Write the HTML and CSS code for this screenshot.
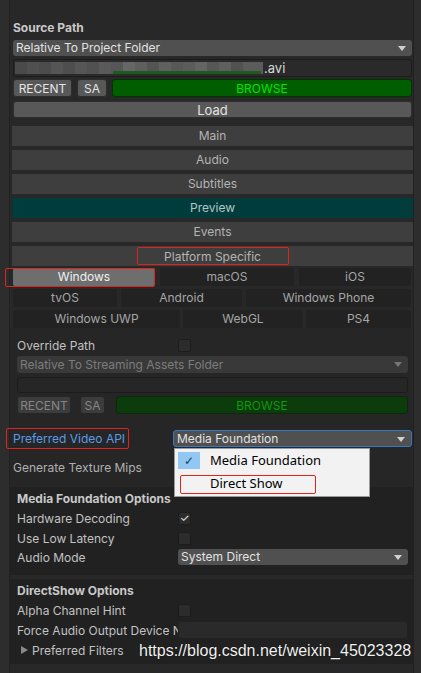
FILE: index.html
```html
<!DOCTYPE html>
<html lang="en">
<head>
    <meta charset="UTF-8">
    <meta name="viewport" content="width=device-width, initial-scale=1.0">
    <title>Media Player Inspector</title>
    <link rel="stylesheet" href="styles.css">
</head>
<body>

<div class="inspector">
    <section class="source">
        <div class="heading">Source Path</div>
        <div class="dropdown">Relative To Project Folder</div>
        <div class="field path"><span class="mosaic"></span><span class="ext">.avi</span></div>
        <div class="btn-row">
            <button class="btn recent">RECENT</button>
            <button class="btn sa">SA</button>
            <button class="btn browse">BROWSE</button>
        </div>
        <button class="btn load">Load</button>
    </section>

    <div class="tabs">
        <div class="tab">Main</div>
        <div class="tab">Audio</div>
        <div class="tab">Subtitles</div>
        <div class="tab active">Preview</div>
        <div class="tab">Events</div>
        <div class="tab"><span class="boxed">Platform Specific</span></div>
    </div>

    <div class="platforms">
        <div class="prow row1">
            <div class="pf sel">Windows</div>
            <div class="pf">macOS</div>
            <div class="pf">iOS</div>
        </div>
        <div class="prow row2">
            <div class="pf">tvOS</div>
            <div class="pf">Android</div>
            <div class="pf">Windows Phone</div>
        </div>
        <div class="prow row3">
            <div class="pf">Windows UWP</div>
            <div class="pf">WebGL</div>
            <div class="pf">PS4</div>
        </div>
    </div>

    <div class="settings">
        <div class="prop">
            <label>Override Path</label>
            <span class="check"></span>
        </div>
        <div class="dropdown off">Relative To Streaming Assets Folder</div>
        <div class="field blank"></div>
        <div class="btn-row dim">
            <button class="btn recent">RECENT</button>
            <button class="btn sa">SA</button>
            <button class="btn browse">BROWSE</button>
        </div>

        <div class="prop wide api">
            <label class="link">Preferred Video API</label>
            <div class="dropdown focus">
                Media Foundation
                <div class="popup">
                    <div class="item"><span class="tick">&#10003;</span>Media Foundation</div>
                    <div class="item"><span class="tick"></span><span class="pick">Direct Show</span></div>
                </div>
            </div>
        </div>
        <div class="prop wide">
            <label>Generate Texture Mips</label>
        </div>
    </div>

    <div class="group mf">
        <div class="heading">Media Foundation Options</div>
        <div class="prop">
            <label>Hardware Decoding</label>
            <span class="check on">&#10003;</span>
        </div>
        <div class="prop">
            <label>Use Low Latency</label>
            <span class="check"></span>
        </div>
        <div class="prop">
            <label>Audio Mode</label>
            <div class="dropdown">System Direct</div>
        </div>
    </div>

    <div class="group ds">
        <div class="heading">DirectShow Options</div>
        <div class="prop">
            <label>Alpha Channel Hint</label>
            <span class="check"></span>
        </div>
        <div class="prop">
            <label class="cut">Force Audio Output Device Name</label>
            <div class="field"></div>
        </div>
        <div class="prop foldout">
            <label><span class="arrow"></span>Preferred Filters</label>
        </div>
    </div>

    <div class="watermark">https://blog.csdn.net/weixin_45023328</div>
</div>

</body>
</html>
```

FILE: styles.css
```css
body {
    margin: 0;
    height: 673px;
    overflow: hidden;
    background-color: #2d2d2d;
    font-family: Inter, "Noto Sans", sans-serif;
    font-size: 12px;
    color: #c2c2c2;
}
.inspector {
    position: relative;
    margin-left: 9px;
    width: 403px;
    height: 673px;
    background-color: #282828;
    border-left: 1px solid #212121;
    border-right: 1px solid #212121;
}
.heading {
    height: 16px;
    line-height: 16px;
    font-weight: bold;
    color: #c8c8c8;
}
.dropdown {
    position: relative;
    height: 16px;
    line-height: 16px;
    padding-left: 3px;
    background-color: #505050;
    border-radius: 3px;
    color: #e2e2e2;
    box-sizing: border-box;
}
.dropdown::after {
    content: '';
    position: absolute;
    right: 6px;
    top: 6px;
    border-left: 4px solid transparent;
    border-right: 4px solid transparent;
    border-top: 5px solid #d0d0d0;
}
.field {
    height: 18px;
    background-color: #2a2a2a;
    border: 1px solid #1c1c1c;
    border-radius: 3px;
    box-sizing: border-box;
}
.btn {
    font-family: Inter, "Noto Sans", sans-serif;
    font-size: 12px;
    height: 18px;
    padding: 0;
    border: 1px solid #2e2e2e;
    border-radius: 3px;
    background-color: #585858;
    color: #e4e4e4;
}

/* source path block */
.source {
    padding: 20px 1px 3px 3px;
}
.source .dropdown {
    margin-top: 4px;
}
.path {
    margin-top: 3px;
    display: flex;
    align-items: center;
}
.mosaic {
    width: 248px;
    height: 12px;
    margin-left: 1px;
    background:
        linear-gradient(to bottom, transparent 9px, #1f5a1f 9px) 98px 0 / 148px 12px no-repeat,
        linear-gradient(to right,
            #4a4a4a 0 12px, #505050 12px 24px, #4c4c4c 24px 36px, #555 36px 48px,
            #4e4e4e 48px 60px, #565656 60px 72px, #515151 72px 84px, #5a5a5a 84px 96px,
            #565656 96px 108px, #666 108px 120px, #5e5e5e 120px 132px, #545454 132px 144px,
            #606060 144px 156px, #585858 156px 168px, #5c5c5c 168px 180px, #646464 180px 192px,
            #575757 192px 204px, #5f5f5f 204px 216px, #525252 216px 228px, #5b5b5b 228px 248px);
}
.ext {
    color: #d8d8d8;
    font-size: 13px;
    margin-left: 1px;
}
.btn-row {
    display: flex;
    gap: 5px;
    margin-top: 2px;
}
.btn-row .recent {
    width: 59px;
}
.btn-row .sa {
    width: 30px;
}
.btn-row .browse {
    flex: 1;
    background-color: #005e00;
    border-color: #003500;
    color: #00e400;
}
.load {
    display: block;
    width: 100%;
    height: 17px;
    margin-top: 4px;
    font-size: 13px;
}

/* section buttons */
.tabs {
    margin-top: 5px;
    padding-left: 2px;
    display: flex;
    flex-direction: column;
    gap: 4px;
}
.tab {
    height: 20px;
    line-height: 20px;
    text-align: center;
    background-color: #3e3e3e;
    color: #b4b4b4;
}
.tab.active {
    background-color: #003c3c;
    color: #b4c6c6;
}
.boxed {
    display: inline-block;
    width: 152px;
    height: 18px;
    line-height: 18px;
    margin-top: 1px;
    border: 1px solid #e0241c;
    border-radius: 2px;
    box-sizing: border-box;
}

/* platform selection grid */
.platforms {
    margin-top: 2px;
    padding: 0 2px 0 3px;
    display: flex;
    flex-direction: column;
    gap: 3px;
}
.prow {
    display: grid;
    gap: 5px;
    height: 18px;
}
.row1 {
    grid-template-columns: 142px 134px 1fr;
}
.row2 {
    grid-template-columns: 104px 121px 1fr;
    gap: 4px;
}
.row3 {
    grid-template-columns: 167px 120px 1fr;
    gap: 3px;
}
.pf {
    line-height: 18px;
    text-align: center;
    background-color: #222;
    border-radius: 2px;
    color: #a6a6a6;
}
.pf.sel {
    position: relative;
    background-color: #6e6e6e;
    color: #f0f0f0;
}
.pf.sel::after {
    content: '';
    position: absolute;
    left: -8px;
    right: 0;
    top: 0;
    bottom: -1px;
    border: 1px solid #e0241c;
    border-radius: 2px;
}

/* per-platform settings */
.settings {
    padding: 0 5px 0 7px;
    background-color: #262626;
}
.prop {
    display: flex;
    align-items: center;
    height: 16px;
}
.prop label {
    width: 161px;
    flex: none;
    white-space: nowrap;
    overflow: hidden;
}
.prop .dropdown,
.prop .field {
    flex: 1;
}
.check {
    width: 13px;
    height: 13px;
    background-color: #2c2c2c;
    border: 1px solid #1c1c1c;
    border-radius: 2px;
    box-sizing: border-box;
    color: #eee;
    font-size: 11px;
    line-height: 11px;
    text-align: center;
}
.settings > .prop:first-child {
    padding-top: 9px;
}
.settings .dropdown.off {
    margin-top: 3px;
    height: 17px;
    line-height: 17px;
    background-color: #393939;
    color: #7c7c7c;
}
.dropdown.off::after {
    border-top-color: #777;
}
.settings .field.blank {
    margin-top: 4px;
    height: 16px;
    background-color: #262626;
}
.btn-row.dim {
    margin-top: 3px;
    gap: 0;
}
.dim .btn {
    background-color: #3c3c3c;
    border-color: #262626;
    color: #868686;
}
.dim .recent {
    width: 54px;
}
.dim .sa {
    width: 25px;
    margin-left: 9px;
}
.dim .browse {
    margin-left: 11px;
    background-color: #0c3b0c;
    border-color: #0a2a0a;
    color: #0b9a0b;
}
.prop.wide {
    margin: 0 -4px 0 -4px;
}
.prop.wide label {
    width: 160px;
}
.api {
    margin-top: 16px !important;
    height: 17px !important;
}
.prop label.link {
    position: relative;
    overflow: visible;
    color: #5b9ce6;
}
.link::after {
    content: '';
    position: absolute;
    left: -7px;
    top: -3px;
    width: 123px;
    height: 21px;
    border: 1px solid #e0241c;
    border-radius: 2px;
    box-sizing: border-box;
}
.dropdown.focus {
    height: 17px;
    line-height: 15px;
    border: 1px solid #3877c2;
}
.popup {
    position: absolute;
    left: 0;
    top: 17px;
    z-index: 2;
    width: 196px;
    height: 49px;
    padding: 3px;
    background-color: #f2f2f2;
    border: 1px solid #9a9a9a;
    box-sizing: border-box;
    font-family: "Noto Sans", sans-serif;
    font-size: 13px;
    color: #000;
}
.item {
    display: flex;
    align-items: center;
    height: 17px;
    line-height: 17px;
}
.item + .item {
    margin-top: 4px;
    height: 20px;
}
.tick {
    width: 22px;
    height: 17px;
    margin-right: 10px;
    text-align: center;
    font-size: 12px;
    color: #1d3e66;
}
.item:first-child .tick {
    background-color: #92c7f3;
}
.pick {
    position: relative;
}
.pick::after {
    content: '';
    position: absolute;
    left: -30px;
    top: 0;
    width: 136px;
    height: 19px;
    border: 1px solid #e0241c;
    border-radius: 2px;
    box-sizing: border-box;
}
.api + .prop {
    margin-top: 12px;
    height: 17px;
    color: #b0b0b0;
    padding-bottom: 11px;
}

/* option groups */
.group {
    padding: 4px 5px 10px 7px;
    background-color: #212121;
}
.group .prop {
    margin-top: 3px;
}
.mf .prop + .prop {
    margin-top: 4px;
}
.mf .prop:last-child {
    margin-top: 3px;
}
.ds {
    margin-top: 4px;
    padding-bottom: 6px;
}
.ds .prop + .prop {
    margin-top: 4px;
}
.ds .field {
    background-color: #2a2a2a;
    border-color: #222;
}
.cut {
    width: 161px;
}
.foldout label {
    display: flex;
    align-items: center;
    padding-left: 4px;
}
.arrow {
    width: 0;
    height: 0;
    margin-right: 4px;
    border-top: 4px solid transparent;
    border-bottom: 4px solid transparent;
    border-left: 7px solid #8a8a8a;
}
.watermark {
    position: absolute;
    left: 129px;
    top: 642px;
    font-family: "Liberation Sans", Arial, sans-serif;
    font-size: 16px;
    color: #f2f2f2;
    text-shadow: 0 0 1px #000;
}
```
